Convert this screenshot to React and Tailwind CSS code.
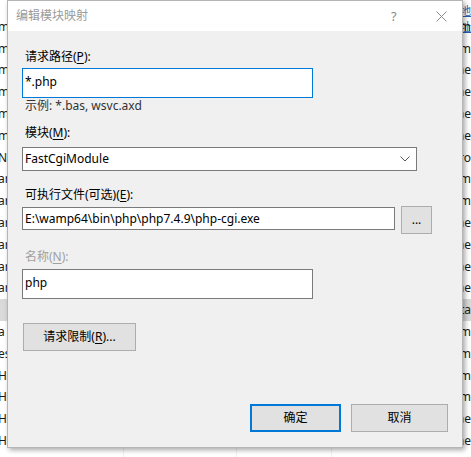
import React from "react";

const rows = [
  { l: "mime", r: "System", ro: "ml-[0px]" },
  { l: "mime", r: "System", ro: "ml-[0px]" },
  { l: "mime", r: "same", ro: "ml-[5px]" },
  { l: "mime", r: "same", ro: "ml-[5px]" },
  { l: "mime", r: "same", ro: "ml-[5px]" },
  { l: "mime", r: "same", ro: "ml-[5px]" },
  { l: "N:", r: "Pro", ro: "ml-[1px]" },
  { l: "arr", r: "System", ro: "ml-[0px]" },
  { l: "arr", r: "System", ro: "ml-[0px]" },
  { l: "arr", r: "same", ro: "ml-[5px]" },
  { l: "arr", r: "same", ro: "ml-[5px]" },
  { l: "arr", r: "same", ro: "ml-[5px]" },
  { l: "arr", r: "same", ro: "ml-[5px]" },
  { l: "", r: "Data", ro: "ml-[1px]", sel: true },
  { l: "a", r: "System", ro: "ml-[0px]" },
  { l: "es", r: "System", ro: "ml-[0px]" },
  { l: "Han", r: "System", ro: "ml-[0px]" },
  { l: "Han", r: "System", ro: "ml-[0px]" },
  { l: "Han", r: "same", ro: "ml-[5px]" },
  { l: "Han", r: "same", ro: "ml-[5px]" },
  { l: "Han", r: "same", ro: "ml-[5px]" },
];

function U({ children }) {
  return <span className="underline underline-offset-2">{children}</span>;
}

export default function App() {
  return (
    <div
      className="relative w-[471px] h-[457px] overflow-hidden bg-white text-[12px] text-black"
      style={{ fontFamily: "'Noto Sans', 'Noto Sans CJK SC', sans-serif" }}
    >
      {/* background list */}
      <div className="flex flex-col">
        <div className="h-[16px] flex justify-end pr-[0px]">
          <span className="ml-[463px] text-[11px] leading-[16px] text-[#2a5db0] underline mt-[3px]">地址</span>
        </div>
        {rows.map((row, i) => (
          <div
            key={i}
            className={`flex h-[21.8px] items-center ${row.sel ? "bg-[#d9d9d9]" : ""}`}
          >
            <div className="w-[132px] h-full border-r border-[#f0f0f0] flex items-center">
              <span className="ml-[-2px] leading-[16px] text-[#1a1a1a]">{row.l}</span>
            </div>
            <div className="w-[120px] h-full border-r border-[#f0f0f0]" />
            <div className="w-[100px] h-full border-r border-[#f0f0f0]" />
            <div className="flex-1 h-full flex items-center pl-[104px]">
              <span className={`${row.ro} leading-[16px] text-[#1a1a1a] whitespace-nowrap`}>{row.r}</span>
            </div>
          </div>
        ))}
      </div>

      {/* dialog */}
      <div className="absolute left-[7px] top-0 w-[456px] h-[448px] border border-[#b5b5b5] bg-[#f0f0f0] shadow-[2px_2px_5px_rgba(0,0,0,0.35)] flex flex-col">
        <div className="h-[30px] bg-white flex items-center pl-[8px] relative">
          <span className="text-[#9a9a9a] leading-[16px]">编辑模块映射</span>
          <span className="absolute left-[383px] top-[6px] text-[#8a8a8a] text-[13px] leading-[18px]">?</span>
          <svg className="absolute left-[428px] top-[10px]" width="11" height="11" viewBox="0 0 11 11">
            <path d="M0.5 0.5 L10.5 10.5 M10.5 0.5 L0.5 10.5" stroke="#8a8a8a" strokeWidth="1" fill="none" />
          </svg>
        </div>

        <div className="flex-1 flex flex-col px-[14px] pt-[18px] pb-[15px]">
          <div className="pl-[3px] h-[16px] leading-[16px]">
            请求路径(<U>P</U>):
          </div>
          <div className="mt-[3px] w-[291px] h-[30px] bg-white border border-[#0078d7] flex items-center pl-[2px] pb-[2px]">
            <span className="leading-[16px]">*.php</span>
          </div>
          <div className="pl-[3px] h-[16px] leading-[16px] text-[#333]">示例: *.bas, wsvc.axd</div>

          <div className="mt-[11px] pl-[3px] h-[16px] leading-[16px]">
            模块(<U>M</U>):
          </div>
          <div className="mt-[6px] w-[395px] h-[24px] bg-white border border-[#7a7a7a] flex items-center pl-[2px] pr-[6px] justify-between">
            <span className="leading-[16px]">FastCgiModule</span>
            <svg width="10" height="6" viewBox="0 0 10 6">
              <path d="M0.5 0.5 L5 5 L9.5 0.5" stroke="#555" strokeWidth="1" fill="none" />
            </svg>
          </div>

          <div className="mt-[16px] pl-[3px] h-[16px] leading-[16px]">
            可执行文件(可选)(<U>E</U>):
          </div>
          <div className="mt-[3px] flex items-start gap-[6px]">
            <div className="mt-[1px] w-[373px] h-[23px] bg-white border border-[#7a7a7a] flex items-center pl-[2px]">
              <span className="leading-[16px] whitespace-nowrap">E:\wamp64\bin\php\php7.4.9\php-cgi.exe</span>
            </div>
            <div className="w-[31px] h-[28px] bg-[#e1e1e1] border border-[#adadad] flex items-center justify-center">
              <span className="leading-[16px]">...</span>
            </div>
          </div>

          <div className="mt-[15px] pl-[3px] h-[16px] leading-[16px] text-[#a0a0a0]">
            名称(<U>N</U>):
          </div>
          <div className="mt-[4px] w-[291px] h-[30px] bg-white border border-[#7a7a7a] flex items-center pl-[2px] pb-[2px]">
            <span className="leading-[16px]">php</span>
          </div>

          <div className="mt-[24px] ml-[1px] w-[113px] h-[28px] bg-[#e1e1e1] border border-[#adadad] flex items-center justify-center">
            <span className="leading-[16px]">
              请求限制(<U>R</U>)...
            </span>
          </div>

          <div className="flex-1" />
          <div className="flex justify-end gap-[10px]">
            <div className="w-[91px] h-[28px] bg-[#e1e1e1] border-2 border-[#0078d7] flex items-center justify-center">
              <span className="leading-[16px]">确定</span>
            </div>
            <div className="w-[97px] h-[28px] bg-[#e1e1e1] border border-[#adadad] flex items-center justify-center">
              <span className="leading-[16px]">取消</span>
            </div>
          </div>
        </div>
      </div>
    </div>
  );
}
